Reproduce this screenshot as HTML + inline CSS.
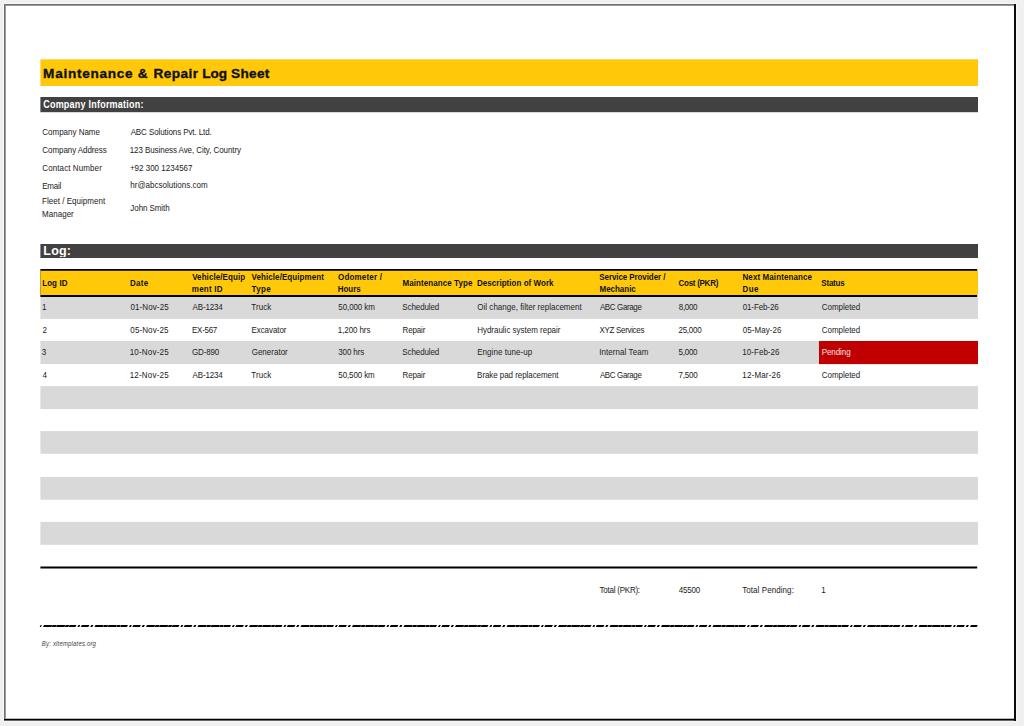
<!DOCTYPE html><html lang="en"><head><meta charset="utf-8"><title>Maintenance &amp; Repair Log Sheet</title><style>
html,body{margin:0;padding:0}
body{width:1024px;height:726px;background:#f0f0f0;position:relative;overflow:hidden;font-family:"Liberation Sans",Arial,sans-serif}
.b{position:absolute}
.t{position:absolute;white-space:nowrap;line-height:1;margin:0;transform-origin:0 84.65%}
</style></head><body>
<svg class="b" style="left:0;top:0" width="1024" height="726" viewBox="0 0 1024 726"><rect x="3" y="3" width="1014" height="719" fill="#f8f8f8"/><rect x="4" y="4" width="1012" height="717" fill="#707070"/><rect x="5" y="5" width="1011" height="716" fill="#9c9c9c"/><rect x="6" y="6" width="1010" height="715" fill="#fff"/><rect x="6" y="718" width="1008" height="1" fill="#bbb"/><rect x="4" y="719" width="1012" height="1" fill="#000"/><rect x="4" y="720" width="1012" height="1" fill="#666"/><rect x="1014" y="4" width="2" height="717" fill="#0c0c0c"/><rect x="40.4" y="59.3" width="937.6" height="26.65" fill="#ffc90a"/><rect x="40.4" y="97" width="937.6" height="15.2" fill="#414141"/><rect x="40.4" y="244" width="937.6" height="14" fill="#414141"/><rect x="40.4" y="269" width="936.8" height="28" fill="#000"/><rect x="40.4" y="270.75" width="937.6" height="24.25" fill="#ffc90a"/><rect x="40.4" y="297.0" width="937.6" height="21.9" fill="#d9d9d9"/><rect x="40.4" y="340.9" width="937.6" height="23.1" fill="#d9d9d9"/><rect x="40.4" y="386.1" width="937.6" height="23.0" fill="#d9d9d9"/><rect x="40.4" y="431.1" width="937.6" height="22.7" fill="#d9d9d9"/><rect x="40.4" y="477.0" width="937.6" height="22.7" fill="#d9d9d9"/><rect x="40.4" y="521.9" width="937.6" height="22.9" fill="#d9d9d9"/><rect x="819" y="341.0" width="159" height="23.1" fill="#c00000"/><rect x="40.4" y="566.5" width="936.8" height="2.0" fill="#000"/><line x1="40.2" y1="626" x2="977.2" y2="626" stroke="#000" stroke-width="2.1" stroke-dashoffset="1" stroke-dasharray="2.2 2.1 8.25 0.4 4 0.4 8.4 0.4 3.4 0.4 6.85 1.9 1.9 1.5 7.6 1.8" transform="translate(0 626) skewX(-27) translate(0 -626)"/></svg>
<div class="t" id="t0" style="left:43.10px;top:67.09px;font-size:13.6px;font-weight:700;color:#111;font-style:normal;letter-spacing:0.718px;-webkit-text-stroke:0.35px #111">Maintenance</div>
<div class="t" id="t1" style="left:137.85px;top:67.09px;font-size:13.6px;font-weight:700;color:#111;font-style:normal;letter-spacing:0.000px;-webkit-text-stroke:0.35px #111">&amp;</div>
<div class="t" id="t2" style="left:153.38px;top:67.09px;font-size:13.6px;font-weight:700;color:#111;font-style:normal;letter-spacing:0.473px;-webkit-text-stroke:0.35px #111">Repair</div>
<div class="t" id="t3" style="left:202.19px;top:67.09px;font-size:13.6px;font-weight:700;color:#111;font-style:normal;letter-spacing:-0.061px;-webkit-text-stroke:0.35px #111">Log</div>
<div class="t" id="t4" style="left:231.00px;top:67.09px;font-size:13.6px;font-weight:700;color:#111;font-style:normal;letter-spacing:0.322px;-webkit-text-stroke:0.35px #111">Sheet</div>
<div class="t" id="t5" style="left:43.20px;top:100.38px;font-size:9px;font-weight:700;color:#fff;font-style:normal;letter-spacing:0.225px;transform:translateY(0.6px) scaleY(1.15)">Company Information:</div>
<div class="t" id="t6" style="left:42.36px;top:129.23px;font-size:8px;font-weight:400;color:#222;font-style:normal;letter-spacing:-0.021px;transform:translateY(0.6px) scaleY(1.18)">Company Name</div>
<div class="t" id="t7" style="left:42.35px;top:146.73px;font-size:8px;font-weight:400;color:#222;font-style:normal;letter-spacing:-0.075px;transform:translateY(0.6px) scaleY(1.18)">Company Address</div>
<div class="t" id="t8" style="left:42.32px;top:165.48px;font-size:8px;font-weight:400;color:#222;font-style:normal;letter-spacing:0.095px;transform:translateY(0.6px) scaleY(1.18)">Contact Number</div>
<div class="t" id="t9" style="left:42.20px;top:183.23px;font-size:8px;font-weight:400;color:#222;font-style:normal;letter-spacing:-0.206px;transform:translateY(0.6px) scaleY(1.18)">Email</div>
<div class="t" id="t10" style="left:42.10px;top:198.23px;font-size:8px;font-weight:400;color:#222;font-style:normal;letter-spacing:0.024px;transform:translateY(0.6px) scaleY(1.18)">Fleet / Equipment</div>
<div class="t" id="t11" style="left:42.10px;top:210.73px;font-size:8px;font-weight:400;color:#222;font-style:normal;letter-spacing:0.017px;transform:translateY(0.6px) scaleY(1.18)">Manager</div>
<div class="t" id="t12" style="left:130.63px;top:128.93px;font-size:8px;font-weight:400;color:#222;font-style:normal;letter-spacing:-0.090px;transform:translateY(0.6px) scaleY(1.18)">ABC Solutions Pvt. Ltd.</div>
<div class="t" id="t13" style="left:129.71px;top:146.73px;font-size:8px;font-weight:400;color:#222;font-style:normal;letter-spacing:-0.073px;transform:translateY(0.6px) scaleY(1.18)">123 Business Ave, City, Country</div>
<div class="t" id="t14" style="left:129.89px;top:165.23px;font-size:8px;font-weight:400;color:#222;font-style:normal;letter-spacing:0.008px;transform:translateY(0.6px) scaleY(1.18)">+92 300 1234567</div>
<div class="t" id="t15" style="left:130.22px;top:181.73px;font-size:8px;font-weight:400;color:#222;font-style:normal;letter-spacing:0.023px;transform:translateY(0.6px) scaleY(1.18)">hr@abcsolutions.com</div>
<div class="t" id="t16" style="left:130.36px;top:205.23px;font-size:8px;font-weight:400;color:#222;font-style:normal;letter-spacing:-0.087px;transform:translateY(0.6px) scaleY(1.18)">John Smith</div>
<div class="t" id="t17" style="left:43.37px;top:244.92px;font-size:12.5px;font-weight:700;color:#fff;font-style:normal;letter-spacing:0.187px;overflow:hidden">Log:</div>
<div class="t" id="t18" style="left:42.18px;top:280.03px;font-size:8px;font-weight:700;color:#111;font-style:normal;letter-spacing:0.083px;transform:translateY(0.6px) scaleY(1.18)">Log ID</div>
<div class="t" id="t19" style="left:129.92px;top:280.03px;font-size:8px;font-weight:700;color:#111;font-style:normal;letter-spacing:0.346px;transform:translateY(0.6px) scaleY(1.18)">Date</div>
<div class="t" id="t20" style="left:192.15px;top:273.53px;font-size:8px;font-weight:700;color:#111;font-style:normal;letter-spacing:0.081px;transform:translateY(0.6px) scaleY(1.18)">Vehicle/Equip</div>
<div class="t" id="t21" style="left:191.85px;top:285.73px;font-size:8px;font-weight:700;color:#111;font-style:normal;letter-spacing:0.216px;transform:translateY(0.6px) scaleY(1.18)">ment ID</div>
<div class="t" id="t22" style="left:251.50px;top:273.53px;font-size:8px;font-weight:700;color:#111;font-style:normal;letter-spacing:0.082px;transform:translateY(0.6px) scaleY(1.18)">Vehicle/Equipment</div>
<div class="t" id="t23" style="left:251.50px;top:285.73px;font-size:8px;font-weight:700;color:#111;font-style:normal;letter-spacing:0.362px;transform:translateY(0.6px) scaleY(1.18)">Type</div>
<div class="t" id="t24" style="left:338.04px;top:273.53px;font-size:8px;font-weight:700;color:#111;font-style:normal;letter-spacing:0.177px;transform:translateY(0.6px) scaleY(1.18)">Odometer /</div>
<div class="t" id="t25" style="left:337.83px;top:285.73px;font-size:8px;font-weight:700;color:#111;font-style:normal;letter-spacing:-0.066px;transform:translateY(0.6px) scaleY(1.18)">Hours</div>
<div class="t" id="t26" style="left:402.50px;top:279.73px;font-size:8px;font-weight:700;color:#111;font-style:normal;letter-spacing:0.078px;transform:translateY(0.6px) scaleY(1.18)">Maintenance Type</div>
<div class="t" id="t27" style="left:476.94px;top:279.73px;font-size:8px;font-weight:700;color:#111;font-style:normal;letter-spacing:0.040px;transform:translateY(0.6px) scaleY(1.18)">Description of Work</div>
<div class="t" id="t28" style="left:599.37px;top:273.53px;font-size:8px;font-weight:700;color:#111;font-style:normal;letter-spacing:-0.092px;transform:translateY(0.6px) scaleY(1.18)">Service Provider /</div>
<div class="t" id="t29" style="left:599.50px;top:285.73px;font-size:8px;font-weight:700;color:#111;font-style:normal;letter-spacing:-0.026px;transform:translateY(0.6px) scaleY(1.18)">Mechanic</div>
<div class="t" id="t30" style="left:678.50px;top:279.73px;font-size:8px;font-weight:700;color:#111;font-style:normal;letter-spacing:-0.268px;transform:translateY(0.6px) scaleY(1.18)">Cost (PKR)</div>
<div class="t" id="t31" style="left:742.50px;top:273.53px;font-size:8px;font-weight:700;color:#111;font-style:normal;letter-spacing:0.096px;transform:translateY(0.6px) scaleY(1.18)">Next Maintenance</div>
<div class="t" id="t32" style="left:742.50px;top:285.73px;font-size:8px;font-weight:700;color:#111;font-style:normal;letter-spacing:0.378px;transform:translateY(0.6px) scaleY(1.18)">Due</div>
<div class="t" id="t33" style="left:821.37px;top:279.73px;font-size:8px;font-weight:700;color:#111;font-style:normal;letter-spacing:-0.229px;transform:translateY(0.6px) scaleY(1.18)">Status</div>
<div class="t" id="t34" style="left:41.88px;top:304.23px;font-size:8px;font-weight:400;color:#222;font-style:normal;letter-spacing:-2.030px;transform:translateY(0.6px) scaleY(1.18)">1</div>
<div class="t" id="t35" style="left:130.46px;top:304.23px;font-size:8px;font-weight:400;color:#222;font-style:normal;letter-spacing:0.104px;transform:translateY(0.6px) scaleY(1.18)">01-Nov-25</div>
<div class="t" id="t36" style="left:192.55px;top:304.23px;font-size:8px;font-weight:400;color:#222;font-style:normal;letter-spacing:-0.147px;transform:translateY(0.6px) scaleY(1.18)">AB-1234</div>
<div class="t" id="t37" style="left:251.32px;top:304.23px;font-size:8px;font-weight:400;color:#222;font-style:normal;letter-spacing:0.066px;transform:translateY(0.6px) scaleY(1.18)">Truck</div>
<div class="t" id="t38" style="left:338.33px;top:304.23px;font-size:8px;font-weight:400;color:#222;font-style:normal;letter-spacing:-0.103px;transform:translateY(0.6px) scaleY(1.18)">50,000 km</div>
<div class="t" id="t39" style="left:402.37px;top:304.23px;font-size:8px;font-weight:400;color:#222;font-style:normal;letter-spacing:-0.106px;transform:translateY(0.6px) scaleY(1.18)">Scheduled</div>
<div class="t" id="t40" style="left:477.33px;top:304.23px;font-size:8px;font-weight:400;color:#222;font-style:normal;letter-spacing:0.010px;transform:translateY(0.6px) scaleY(1.18)">Oil change, filter replacement</div>
<div class="t" id="t41" style="left:599.89px;top:304.23px;font-size:8px;font-weight:400;color:#222;font-style:normal;letter-spacing:-0.371px;transform:translateY(0.6px) scaleY(1.18)">ABC Garage</div>
<div class="t" id="t42" style="left:678.76px;top:304.23px;font-size:8px;font-weight:400;color:#222;font-style:normal;letter-spacing:-0.301px;transform:translateY(0.6px) scaleY(1.18)">8,000</div>
<div class="t" id="t43" style="left:742.67px;top:304.23px;font-size:8px;font-weight:400;color:#222;font-style:normal;letter-spacing:-0.105px;transform:translateY(0.6px) scaleY(1.18)">01-Feb-26</div>
<div class="t" id="t44" style="left:821.74px;top:304.23px;font-size:8px;font-weight:400;color:#222;font-style:normal;letter-spacing:-0.026px;transform:translateY(0.6px) scaleY(1.18)">Completed</div>
<div class="t" id="t45" style="left:42.42px;top:326.73px;font-size:8px;font-weight:400;color:#222;font-style:normal;letter-spacing:0.963px;transform:translateY(0.6px) scaleY(1.18)">2</div>
<div class="t" id="t46" style="left:130.37px;top:326.73px;font-size:8px;font-weight:400;color:#222;font-style:normal;letter-spacing:0.106px;transform:translateY(0.6px) scaleY(1.18)">05-Nov-25</div>
<div class="t" id="t47" style="left:192.05px;top:326.73px;font-size:8px;font-weight:400;color:#222;font-style:normal;letter-spacing:-0.288px;transform:translateY(0.6px) scaleY(1.18)">EX-567</div>
<div class="t" id="t48" style="left:251.50px;top:326.73px;font-size:8px;font-weight:400;color:#222;font-style:normal;letter-spacing:-0.079px;transform:translateY(0.6px) scaleY(1.18)">Excavator</div>
<div class="t" id="t49" style="left:337.80px;top:326.73px;font-size:8px;font-weight:400;color:#222;font-style:normal;letter-spacing:-0.091px;transform:translateY(0.6px) scaleY(1.18)">1,200 hrs</div>
<div class="t" id="t50" style="left:402.50px;top:326.73px;font-size:8px;font-weight:400;color:#222;font-style:normal;letter-spacing:-0.128px;transform:translateY(0.6px) scaleY(1.18)">Repair</div>
<div class="t" id="t51" style="left:477.13px;top:326.73px;font-size:8px;font-weight:400;color:#222;font-style:normal;letter-spacing:-0.010px;transform:translateY(0.6px) scaleY(1.18)">Hydraulic system repair</div>
<div class="t" id="t52" style="left:599.53px;top:326.73px;font-size:8px;font-weight:400;color:#222;font-style:normal;letter-spacing:-0.324px;transform:translateY(0.6px) scaleY(1.18)">XYZ Services</div>
<div class="t" id="t53" style="left:678.50px;top:326.73px;font-size:8px;font-weight:400;color:#222;font-style:normal;letter-spacing:-0.277px;transform:translateY(0.6px) scaleY(1.18)">25,000</div>
<div class="t" id="t54" style="left:742.83px;top:326.73px;font-size:8px;font-weight:400;color:#222;font-style:normal;letter-spacing:0.054px;transform:translateY(0.6px) scaleY(1.18)">05-May-26</div>
<div class="t" id="t55" style="left:821.74px;top:326.73px;font-size:8px;font-weight:400;color:#222;font-style:normal;letter-spacing:-0.024px;transform:translateY(0.6px) scaleY(1.18)">Completed</div>
<div class="t" id="t56" style="left:41.82px;top:349.23px;font-size:8px;font-weight:400;color:#222;font-style:normal;letter-spacing:-1.878px;transform:translateY(0.6px) scaleY(1.18)">3</div>
<div class="t" id="t57" style="left:129.74px;top:349.23px;font-size:8px;font-weight:400;color:#222;font-style:normal;letter-spacing:0.188px;transform:translateY(0.6px) scaleY(1.18)">10-Nov-25</div>
<div class="t" id="t58" style="left:192.06px;top:349.23px;font-size:8px;font-weight:400;color:#222;font-style:normal;letter-spacing:-0.187px;transform:translateY(0.6px) scaleY(1.18)">GD-890</div>
<div class="t" id="t59" style="left:251.70px;top:349.23px;font-size:8px;font-weight:400;color:#222;font-style:normal;letter-spacing:0.007px;transform:translateY(0.6px) scaleY(1.18)">Generator</div>
<div class="t" id="t60" style="left:338.19px;top:349.23px;font-size:8px;font-weight:400;color:#222;font-style:normal;letter-spacing:-0.104px;transform:translateY(0.6px) scaleY(1.18)">300 hrs</div>
<div class="t" id="t61" style="left:402.37px;top:349.23px;font-size:8px;font-weight:400;color:#222;font-style:normal;letter-spacing:-0.106px;transform:translateY(0.6px) scaleY(1.18)">Scheduled</div>
<div class="t" id="t62" style="left:477.17px;top:349.23px;font-size:8px;font-weight:400;color:#222;font-style:normal;letter-spacing:0.062px;transform:translateY(0.6px) scaleY(1.18)">Engine tune-up</div>
<div class="t" id="t63" style="left:599.24px;top:349.23px;font-size:8px;font-weight:400;color:#222;font-style:normal;letter-spacing:0.065px;transform:translateY(0.6px) scaleY(1.18)">Internal Team</div>
<div class="t" id="t64" style="left:678.50px;top:349.23px;font-size:8px;font-weight:400;color:#222;font-style:normal;letter-spacing:-0.240px;transform:translateY(0.6px) scaleY(1.18)">5,000</div>
<div class="t" id="t65" style="left:742.31px;top:349.23px;font-size:8px;font-weight:400;color:#222;font-style:normal;letter-spacing:0.036px;transform:translateY(0.6px) scaleY(1.18)">10-Feb-26</div>
<div class="t" id="t66" style="left:821.74px;top:349.23px;font-size:8px;font-weight:400;color:#f6e0e0;font-style:normal;letter-spacing:-0.080px;transform:translateY(0.6px) scaleY(1.18)">Pending</div>
<div class="t" id="t67" style="left:42.46px;top:371.53px;font-size:8px;font-weight:400;color:#222;font-style:normal;letter-spacing:-0.683px;transform:translateY(0.6px) scaleY(1.18)">4</div>
<div class="t" id="t68" style="left:129.73px;top:371.53px;font-size:8px;font-weight:400;color:#222;font-style:normal;letter-spacing:0.189px;transform:translateY(0.6px) scaleY(1.18)">12-Nov-25</div>
<div class="t" id="t69" style="left:192.58px;top:371.53px;font-size:8px;font-weight:400;color:#222;font-style:normal;letter-spacing:-0.153px;transform:translateY(0.6px) scaleY(1.18)">AB-1234</div>
<div class="t" id="t70" style="left:251.32px;top:371.53px;font-size:8px;font-weight:400;color:#222;font-style:normal;letter-spacing:0.065px;transform:translateY(0.6px) scaleY(1.18)">Truck</div>
<div class="t" id="t71" style="left:338.30px;top:371.53px;font-size:8px;font-weight:400;color:#222;font-style:normal;letter-spacing:-0.119px;transform:translateY(0.6px) scaleY(1.18)">50,500 km</div>
<div class="t" id="t72" style="left:402.50px;top:371.53px;font-size:8px;font-weight:400;color:#222;font-style:normal;letter-spacing:-0.128px;transform:translateY(0.6px) scaleY(1.18)">Repair</div>
<div class="t" id="t73" style="left:477.11px;top:371.53px;font-size:8px;font-weight:400;color:#222;font-style:normal;letter-spacing:-0.064px;transform:translateY(0.6px) scaleY(1.18)">Brake pad replacement</div>
<div class="t" id="t74" style="left:599.91px;top:371.53px;font-size:8px;font-weight:400;color:#222;font-style:normal;letter-spacing:-0.374px;transform:translateY(0.6px) scaleY(1.18)">ABC Garage</div>
<div class="t" id="t75" style="left:678.59px;top:371.53px;font-size:8px;font-weight:400;color:#222;font-style:normal;letter-spacing:-0.247px;transform:translateY(0.6px) scaleY(1.18)">7,500</div>
<div class="t" id="t76" style="left:742.30px;top:371.53px;font-size:8px;font-weight:400;color:#222;font-style:normal;letter-spacing:0.179px;transform:translateY(0.6px) scaleY(1.18)">12-Mar-26</div>
<div class="t" id="t77" style="left:821.74px;top:371.53px;font-size:8px;font-weight:400;color:#222;font-style:normal;letter-spacing:-0.024px;transform:translateY(0.6px) scaleY(1.18)">Completed</div>
<div class="t" id="t78" style="left:599.62px;top:586.73px;font-size:8px;font-weight:400;color:#222;font-style:normal;letter-spacing:-0.241px;transform:translateY(0.6px) scaleY(1.18)">Total (PKR):</div>
<div class="t" id="t79" style="left:678.77px;top:586.73px;font-size:8px;font-weight:400;color:#222;font-style:normal;letter-spacing:-0.192px;transform:translateY(0.6px) scaleY(1.18)">45500</div>
<div class="t" id="t80" style="left:742.18px;top:586.73px;font-size:8px;font-weight:400;color:#222;font-style:normal;letter-spacing:0.075px;transform:translateY(0.6px) scaleY(1.18)">Total Pending:</div>
<div class="t" id="t81" style="left:821.32px;top:586.73px;font-size:8px;font-weight:400;color:#222;font-style:normal;letter-spacing:3.937px;transform:translateY(0.6px) scaleY(1.18)">1</div>
<div class="t" id="t82" style="left:41.87px;top:639.82px;font-size:6px;font-weight:400;color:#444;font-style:italic;letter-spacing:0.171px;transform:translateY(0.6px) scaleY(1.3)">By: xltemplates.org</div>
</body></html>
